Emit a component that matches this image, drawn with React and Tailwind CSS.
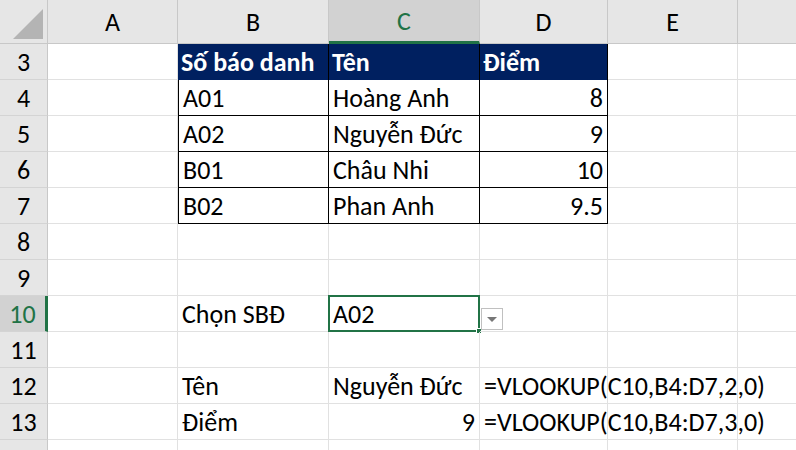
const cols = [
  { k: "A", w: 130 },
  { k: "B", w: 151 },
  { k: "C", w: 151 },
  { k: "D", w: 128 },
  { k: "E", w: 130 },
  { k: "F", w: 80 },
];
const font = { fontFamily: "Carlito, Calibri, 'Open Sans', 'Noto Sans', sans-serif" };

const rows = [
  { n: 3, c: { B: ["Số báo danh", "h"], C: ["Tên", "h"], D: ["Điểm", "h"] } },
  { n: 4, c: { B: ["A01", "t"], C: ["Hoàng Anh", "t"], D: ["8", "tr"] } },
  { n: 5, c: { B: ["A02", "t"], C: ["Nguyễn Đức", "t"], D: ["9", "tr"] } },
  { n: 6, c: { B: ["B01", "t"], C: ["Châu Nhi", "t"], D: ["10", "tr"] } },
  { n: 7, c: { B: ["B02", "t"], C: ["Phan Anh", "t"], D: ["9.5", "tr"] } },
  { n: 8, c: {} },
  { n: 9, c: {} },
  { n: 10, c: { B: ["Chọn SBĐ", ""], C: ["A02", "sel"] } },
  { n: 11, c: {} },
  { n: 12, c: { B: ["Tên", ""], C: ["Nguyễn Đức", ""], D: ["=VLOOKUP(C10,B4:D7,2,0)", "o"] } },
  { n: 13, c: { B: ["Điểm", ""], C: ["9", "r"], D: ["=VLOOKUP(C10,B4:D7,3,0)", "o"] } },
  { n: "", c: {} },
];

export default function App() {
  return (
    <div className="w-[796px] h-[450px] overflow-hidden bg-white text-[26px] leading-none text-black" style={font}>
      <div className="flex h-[44px] bg-[#e6e6e6]">
        <div className="w-[48px] shrink-0 border-r border-b border-[#c8c8c8] relative">
          <div className="absolute right-[4px] bottom-[4px] w-0 h-0 border-l-[30px] border-l-transparent border-b-[30px] border-b-[#b4b4b4]" />
        </div>
        {cols.map((c) => (
          <div
            key={c.k}
            className={`shrink-0 flex items-center justify-center border-r border-[#c8c8c8] ${c.k === "C" ? "bg-[#d2d2d2] text-[#217346] border-b-[3px] border-b-[#217346]" : "border-b border-b-[#c8c8c8]"}`}
            style={{ width: c.w }}
          >
            {c.k === "F" ? "" : c.k}
          </div>
        ))}
      </div>
      {rows.map((r, i) => (
        <div key={i} className="flex h-[36px]">
          <div
            className={`w-[48px] shrink-0 flex items-center justify-center border-b border-[#d4d4d4] ${r.n === 10 ? "bg-[#d2d2d2] text-[#217346] border-r-[3px] border-r-[#217346]" : "bg-[#e6e6e6] border-r border-r-[#c8c8c8]"}`}
          >
            {r.n}
          </div>
          {cols.map((c) => {
            const cell = r.c[c.k];
            const t = cell ? cell[1] : "";
            let cls = "shrink-0 flex items-center px-[4px] whitespace-nowrap relative border-r border-b border-[#e1e1e1]";
            if (t === "h") cls = "shrink-0 flex items-center px-[3px] whitespace-nowrap bg-[#002060] text-white font-bold border-r border-black";
            if (t === "t" || t === "tr") cls = "shrink-0 flex items-center px-[4px] whitespace-nowrap border-r border-b border-black" + (c.k === "B" ? " border-l" : "") + (t === "tr" ? " justify-end" : "");
            if (t === "r") cls += " justify-end";
            if (t === "o") cls += " overflow-visible z-10";
            return (
              <div key={c.k} className={cls} style={{ width: c.w }}>
                {t === "sel" && (
                  <>
                    <div className="absolute -left-[1px] -top-[1px] w-[152px] h-[37px] border-2 border-[#217346]" />
                    <div className="absolute right-[-3px] bottom-[-3px] w-[6px] h-[6px] bg-[#217346] border border-white" />
                    <div className="absolute left-[152px] top-[12px] w-[22px] h-[22px] bg-white border border-[#c0c0c0] flex items-center justify-center">
                      <div className="w-0 h-0 border-l-[5px] border-r-[5px] border-t-[5px] border-l-transparent border-r-transparent border-t-[#777]" />
                    </div>
                  </>
                )}
                {cell && <span className={t === "o" ? "absolute left-[4px]" : ""}>{cell[0]}</span>}
              </div>
            );
          })}
        </div>
      ))}
    </div>
  );
}
